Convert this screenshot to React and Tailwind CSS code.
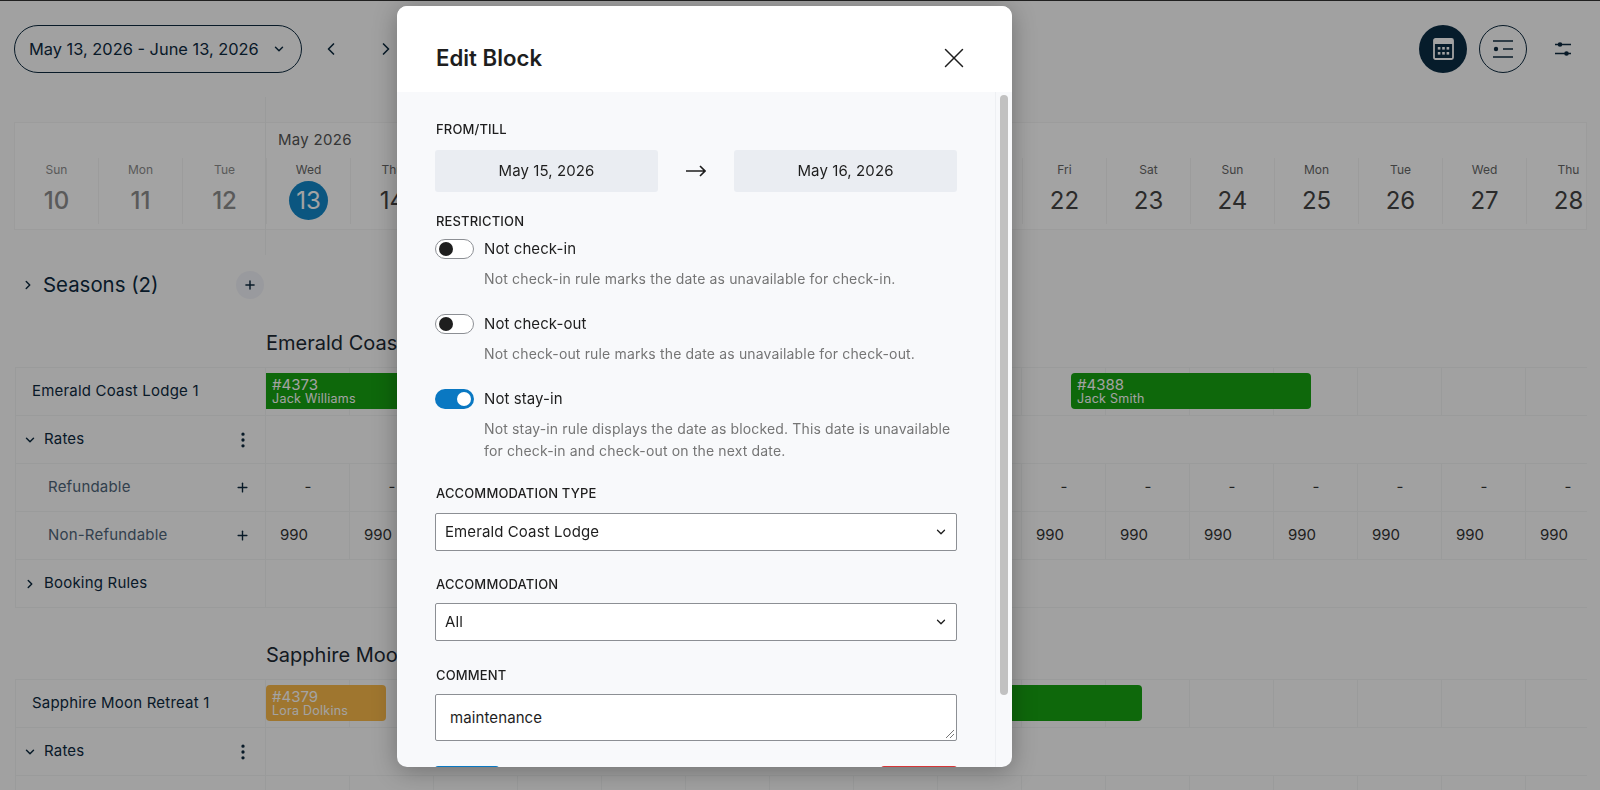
import React from "react";
import { ChevronDown, ChevronLeft, ChevronRight, Plus, X, EllipsisVertical } from "lucide-react";

const past = [
  ["Sun", 10],
  ["Mon", 11],
  ["Tue", 12],
];
const days = [
  ["Wed", 13], ["Thu", 14], ["Fri", 15], ["Sat", 16], ["Sun", 17], ["Mon", 18], ["Tue", 19], ["Wed", 20],
  ["Thu", 21], ["Fri", 22], ["Sat", 23], ["Sun", 24], ["Mon", 25], ["Tue", 26], ["Wed", 27], ["Thu", 28],
];

function Cells() {
  return days.map(([d, n]) => (
    <div key={n} className="w-[84px] shrink-0 border-r border-[#f1f2f3]" />
  ));
}

function Booking({ left, width, color, id, name, square }) {
  return (
    <div
      className={`absolute top-[5px] ${color} h-[36px] px-[6px] text-white ${square ? "rounded-none" : "rounded-[4px]"}`}
      style={{ left, width }}
    >
      <div className="text-[15px] pt-[4px] leading-[15px]">{id}</div>
      <div className="text-[12.5px] leading-[13px] tracking-[0.25px]">{name}</div>
    </div>
  );
}

function Row({ children }) {
  return <div className="flex h-[48px] border-b border-[#f1f2f3] relative">{children}</div>;
}

function Side({ children }) {
  return <div className="w-[250px] shrink-0 border-r border-[#f1f2f3] flex items-center relative tracking-[0.2px]">{children}</div>;
}

function RatesRow() {
  return (
    <Row>
      <Side>
        <ChevronDown size={14} strokeWidth={2.5} className="ml-[7px] text-[#0e2a3f]" />
        <span className="ml-[7px] text-[15px] text-[#0e2a3f]">Rates</span>
        <EllipsisVertical size={20} strokeWidth={2} className="absolute left-[217px] text-[#0e2a3f]" />
      </Side>
    </Row>
  );
}

function PriceRow({ label, value, center }) {
  return (
    <Row>
      <Side>
        <span className="ml-[32px] text-[15px] text-[#4f6579]">{label}</span>
        <Plus size={15} strokeWidth={2.2} className="absolute left-[219px] text-[#0e2a3f]" />
      </Side>
      {days.map(([d, n]) => (
        <div
          key={n}
          className={`w-[84px] shrink-0 border-r border-[#f1f2f3] flex items-center text-[15px] text-[#333] ${center ? "justify-center pl-[1px]" : "pl-[14px]"}`}
        >
          {value}
        </div>
      ))}
    </Row>
  );
}

function Table({ title, mt, children }) {
  return (
    <div className={mt}>
      <div className="pl-[251px] h-[36px] text-[20px] leading-[24px] text-[#1d2a35] whitespace-nowrap">{title}</div>
      <div className="border-t border-l border-[#f1f2f3] overflow-hidden">{children}</div>
    </div>
  );
}

function Toggle({ on }) {
  return on ? (
    <span className="w-[39px] h-[20px] rounded-full bg-[#0a78c2] flex items-center justify-end pr-[3px] shrink-0">
      <span className="w-[14px] h-[14px] rounded-full bg-white" />
    </span>
  ) : (
    <span className="w-[39px] h-[20px] rounded-full bg-white border border-[#8c8f94] flex items-center pl-[3px] shrink-0">
      <span className="w-[14px] h-[14px] rounded-full bg-[#1e1e1e]" />
    </span>
  );
}

function Rule({ on, label, children, mb }) {
  return (
    <div className={mb}>
      <div className="flex items-center gap-[10px] h-[20px]">
        <Toggle on={on} />
        <span className="text-[15px] text-[#1e1e1e] tracking-[0.08px]">{label}</span>
      </div>
      <p className="ml-[49px] mt-[9px] text-[14px] leading-[22px] text-[#757575] tracking-[0.15px]">{children}</p>
    </div>
  );
}

function Label({ children, mt }) {
  return <div className={`ml-px text-[13px] leading-[20px] font-medium text-[#1e1e1e] tracking-[0.15px] ${mt}`}>{children}</div>;
}

function Select({ value, mt }) {
  return (
    <div className={`${mt} h-[38px] bg-white border border-[#8c8f94] rounded-[2px] flex items-center justify-between pl-[9px] pr-[8px] text-[15px] text-[#1e1e1e] tracking-[0.1px]`}>
      {value}
      <ChevronDown size={14} strokeWidth={2.2} />
    </div>
  );
}

export default function App() {
  return (
    <div className="relative h-[790px] w-[1600px] overflow-hidden bg-[#fcfcfc] font-['Inter',sans-serif]">
      <div className="h-px bg-[#333]" />

      <div className="flex items-center h-[48px] mt-[24px] pl-[14px] pr-[16px]">
        <div className="w-[288px] h-[48px] rounded-full border border-[#0e2a3f] flex items-center pl-[14px] text-[16.4px] text-[#0e2a3f] whitespace-nowrap">
          May 13, 2026 - June 13, 2026
          <ChevronDown size={14} strokeWidth={2.5} className="ml-[13px]" />
        </div>
        <ChevronLeft size={20} strokeWidth={2} className="ml-[19px] text-[#0e2a3f]" />
        <ChevronRight size={20} strokeWidth={2} className="ml-[35px] text-[#0e2a3f]" />
        <div className="ml-auto flex items-center">
          <div className="w-[48px] h-[48px] rounded-full bg-[#0a2c44] flex items-center justify-center">
            <svg width="21" height="22" viewBox="0 0 21 22" fill="none">
              <rect x="1" y="1" width="19" height="20" rx="1.5" stroke="white" strokeWidth="1.8" />
              <rect x="1" y="1" width="19" height="5" fill="white" />
              <g fill="white">
                <rect x="4.8" y="9" width="2.6" height="2.6" /><rect x="9.2" y="9" width="2.6" height="2.6" /><rect x="13.6" y="9" width="2.6" height="2.6" />
                <rect x="4.8" y="14" width="2.6" height="2.6" /><rect x="9.2" y="14" width="2.6" height="2.6" /><rect x="13.6" y="14" width="2.6" height="2.6" />
              </g>
            </svg>
          </div>
          <div className="ml-[12px] w-[48px] h-[48px] rounded-full border border-[#0e2a3f] flex items-center justify-center">
            <svg width="20" height="18" viewBox="0 0 20 18" fill="none" stroke="#0e2a3f" strokeWidth="1.6">
              <path d="M0 1h20M10 9h10M0 17h20" />
              <circle cx="3" cy="9" r="2.2" fill="#0e2a3f" stroke="none" />
            </svg>
          </div>
          <svg className="ml-[27px] mr-[12px]" width="18" height="18" viewBox="0 0 18 18" fill="#0e2a3f" stroke="#0e2a3f" strokeWidth="1.3">
            <path d="M1 4.5h16M1 13.5h16" />
            <circle cx="6" cy="4.5" r="2.3" stroke="none" />
            <circle cx="12.5" cy="13.5" r="2.3" stroke="none" />
          </svg>
        </div>
      </div>

      <div className="relative mt-[24px] h-[158px] pt-[25px] pl-[14px] pr-[13px]">
        <div className="absolute left-[265px] top-0 bottom-0 w-px bg-[#f1f2f3]" />
        <div className="h-[108px] border border-[#f4f4f5] bg-white overflow-hidden">
          <div className="h-[35px] pl-[263px] pt-[7px] text-[15px] leading-[20px] text-[#555] tracking-[0.3px]">May 2026</div>
          <div className="flex h-[66px]">
            {past.map(([d, n]) => (
              <div key={n} className="w-[84px] shrink-0 border-r border-[#f4f4f5] text-center text-[#8d8d8d]">
                <div className="text-[12px] leading-[20px] mt-[2px]">{d}</div>
                <div className="text-[24px] leading-[30px] mt-[6px] font-medium">{n}</div>
              </div>
            ))}
            {days.map(([d, n]) => (
              <div key={n} className="w-[84px] shrink-0 border-r border-[#f4f4f5] text-center text-[#444]">
                <div className="text-[12px] leading-[20px] mt-[2px] text-[#666]">{d}</div>
                {n === 13 ? (
                  <div className="mx-auto mt-[1px] w-[39px] h-[39px] rounded-full bg-[#1287c8] text-white text-[24px] leading-[39px]">{n}</div>
                ) : (
                  <div className="text-[24px] leading-[30px] mt-[6px]">{n}</div>
                )}
              </div>
            ))}
          </div>
        </div>
      </div>

      <div className="flex items-center h-[28px] mt-[16px] pl-[21px]">
        <ChevronRight size={14} strokeWidth={2.5} className="text-[#0e2a3f]" />
        <span className="ml-[8px] text-[20.4px] text-[#0e2a3f]">Seasons (2)</span>
        <div className="ml-[78px] w-[28px] h-[28px] rounded-full bg-[#f0f1f7] flex items-center justify-center">
          <Plus size={14} strokeWidth={2.5} className="text-[#0e2a3f]" />
        </div>
      </div>

      <div className="pl-[15px] w-[1587px] overflow-hidden">
        <Table title="Emerald Coast Lodge" mt="mt-[32px]">
          <div className="w-[1700px]">
            <Row>
              <Side><span className="ml-[16px] text-[15px] text-[#0e2a3f]">Emerald Coast Lodge 1</span></Side>
              <Cells />
              <Booking left={250} width={240} color="bg-[#17a312]" id="#4373" name="Jack Williams" square />
              <Booking left={1055} width={240} color="bg-[#17a312]" id="#4388" name="Jack Smith" />
            </Row>
            <RatesRow />
            <PriceRow label="Refundable" value="-" center />
            <PriceRow label="Non-Refundable" value="990" />
            <Row>
              <Side>
                <ChevronRight size={14} strokeWidth={2.5} className="ml-[7px] text-[#0e2a3f]" />
                <span className="ml-[7px] text-[15px] text-[#0e2a3f]">Booking Rules</span>
              </Side>
            </Row>
          </div>
        </Table>

        <Table title="Sapphire Moon Retreat" mt="mt-[35px]">
          <div className="w-[1700px]">
            <Row>
              <Side><span className="ml-[16px] text-[15px] text-[#0e2a3f]">Sapphire Moon Retreat 1</span></Side>
              <Cells />
              <Booking left={250} width={120} color="bg-[#f9b94a]" id="#4379" name="Lora Dolkins" />
              <Booking left={800} width={326} color="bg-[#17a312]" />
            </Row>
            <RatesRow />
            <Row>
              <Side />
              <Cells />
            </Row>
          </div>
        </Table>
      </div>

      <div className="absolute inset-0 bg-black/[0.36] backdrop-blur-[0.6px]" />

      <div className="absolute left-[397px] top-[6px] w-[615px] h-[761px] rounded-[10px] overflow-hidden bg-[#f8f9fb] shadow-[0_4px_24px_rgba(0,0,0,0.3)] flex flex-col">
        <div className="h-[86px] shrink-0 pt-[18px] bg-white flex items-center justify-between pl-[39px] pr-[41px]">
          <h2 className="text-[22.2px] font-semibold text-[#1e1e1e]">Edit Block</h2>
          <X size={34} strokeWidth={1.05} className="text-[#1e1e1e]" />
        </div>
        <div className="relative flex-1 pl-[38px] pr-[55px] pt-[27px]">
          <div className="absolute right-0 top-0 bottom-0 w-[17px] border-l border-[#eef0f3]">
            <div className="mx-auto mt-[3px] w-[8px] h-[600px] rounded-full bg-[#c1c1c1]" />
          </div>

          <Label>FROM/TILL</Label>
          <div className="mt-[11px] flex items-center justify-between tracking-[0.1px]">
            <div className="w-[223px] h-[42px] rounded-[3px] bg-[#eaedf2] flex items-center justify-center text-[15px] text-[#1e1e1e]">May 15, 2026</div>
            <svg width="20" height="14" viewBox="0 0 20 14" fill="none" stroke="#1e1e1e" strokeWidth="1.6">
              <path d="M0 7h19M14 2l5 5-5 5" />
            </svg>
            <div className="w-[223px] h-[42px] rounded-[3px] bg-[#eaedf2] flex items-center justify-center text-[15px] text-[#1e1e1e]">May 16, 2026</div>
          </div>

          <Label mt="mt-[19px]">RESTRICTION</Label>
          <div className="mt-[8px]">
            <Rule label="Not check-in" mb="mb-[24px]">Not check-in rule marks the date as unavailable for check-in.</Rule>
            <Rule label="Not check-out" mb="mb-[24px]">Not check-out rule marks the date as unavailable for check-out.</Rule>
            <Rule on label="Not stay-in">
              Not stay-in rule displays the date as blocked. This date is unavailable
              <br />
              for check-in and check-out on the next date.
            </Rule>
          </div>

          <Label mt="mt-[21px]">ACCOMMODATION TYPE</Label>
          <Select value="Emerald Coast Lodge" mt="mt-[10px]" />

          <Label mt="mt-[23px]">ACCOMMODATION</Label>
          <Select value="All" mt="mt-[9px]" />

          <Label mt="mt-[24px]">COMMENT</Label>
          <div className="relative mt-[9px] h-[47px] bg-white border border-[#8c8f94] rounded-[2px] pl-[14px] pt-[1px] flex items-center text-[15px] text-[#1e1e1e] tracking-[0.1px]">
            maintenance
            <svg className="absolute right-[1px] bottom-[1px]" width="10" height="10" viewBox="0 0 10 10" stroke="#777" fill="none">
              <path d="M1 9 9 1M5 9l4-4" />
            </svg>
          </div>

          <div className="mt-[25px] flex justify-between">
            <div className="w-[64px] h-[36px] rounded-[3px] bg-[#0a78c2]" />
            <div className="w-[76px] h-[36px] rounded-[3px] bg-[#d63638]" />
          </div>
        </div>
      </div>
    </div>
  );
}
